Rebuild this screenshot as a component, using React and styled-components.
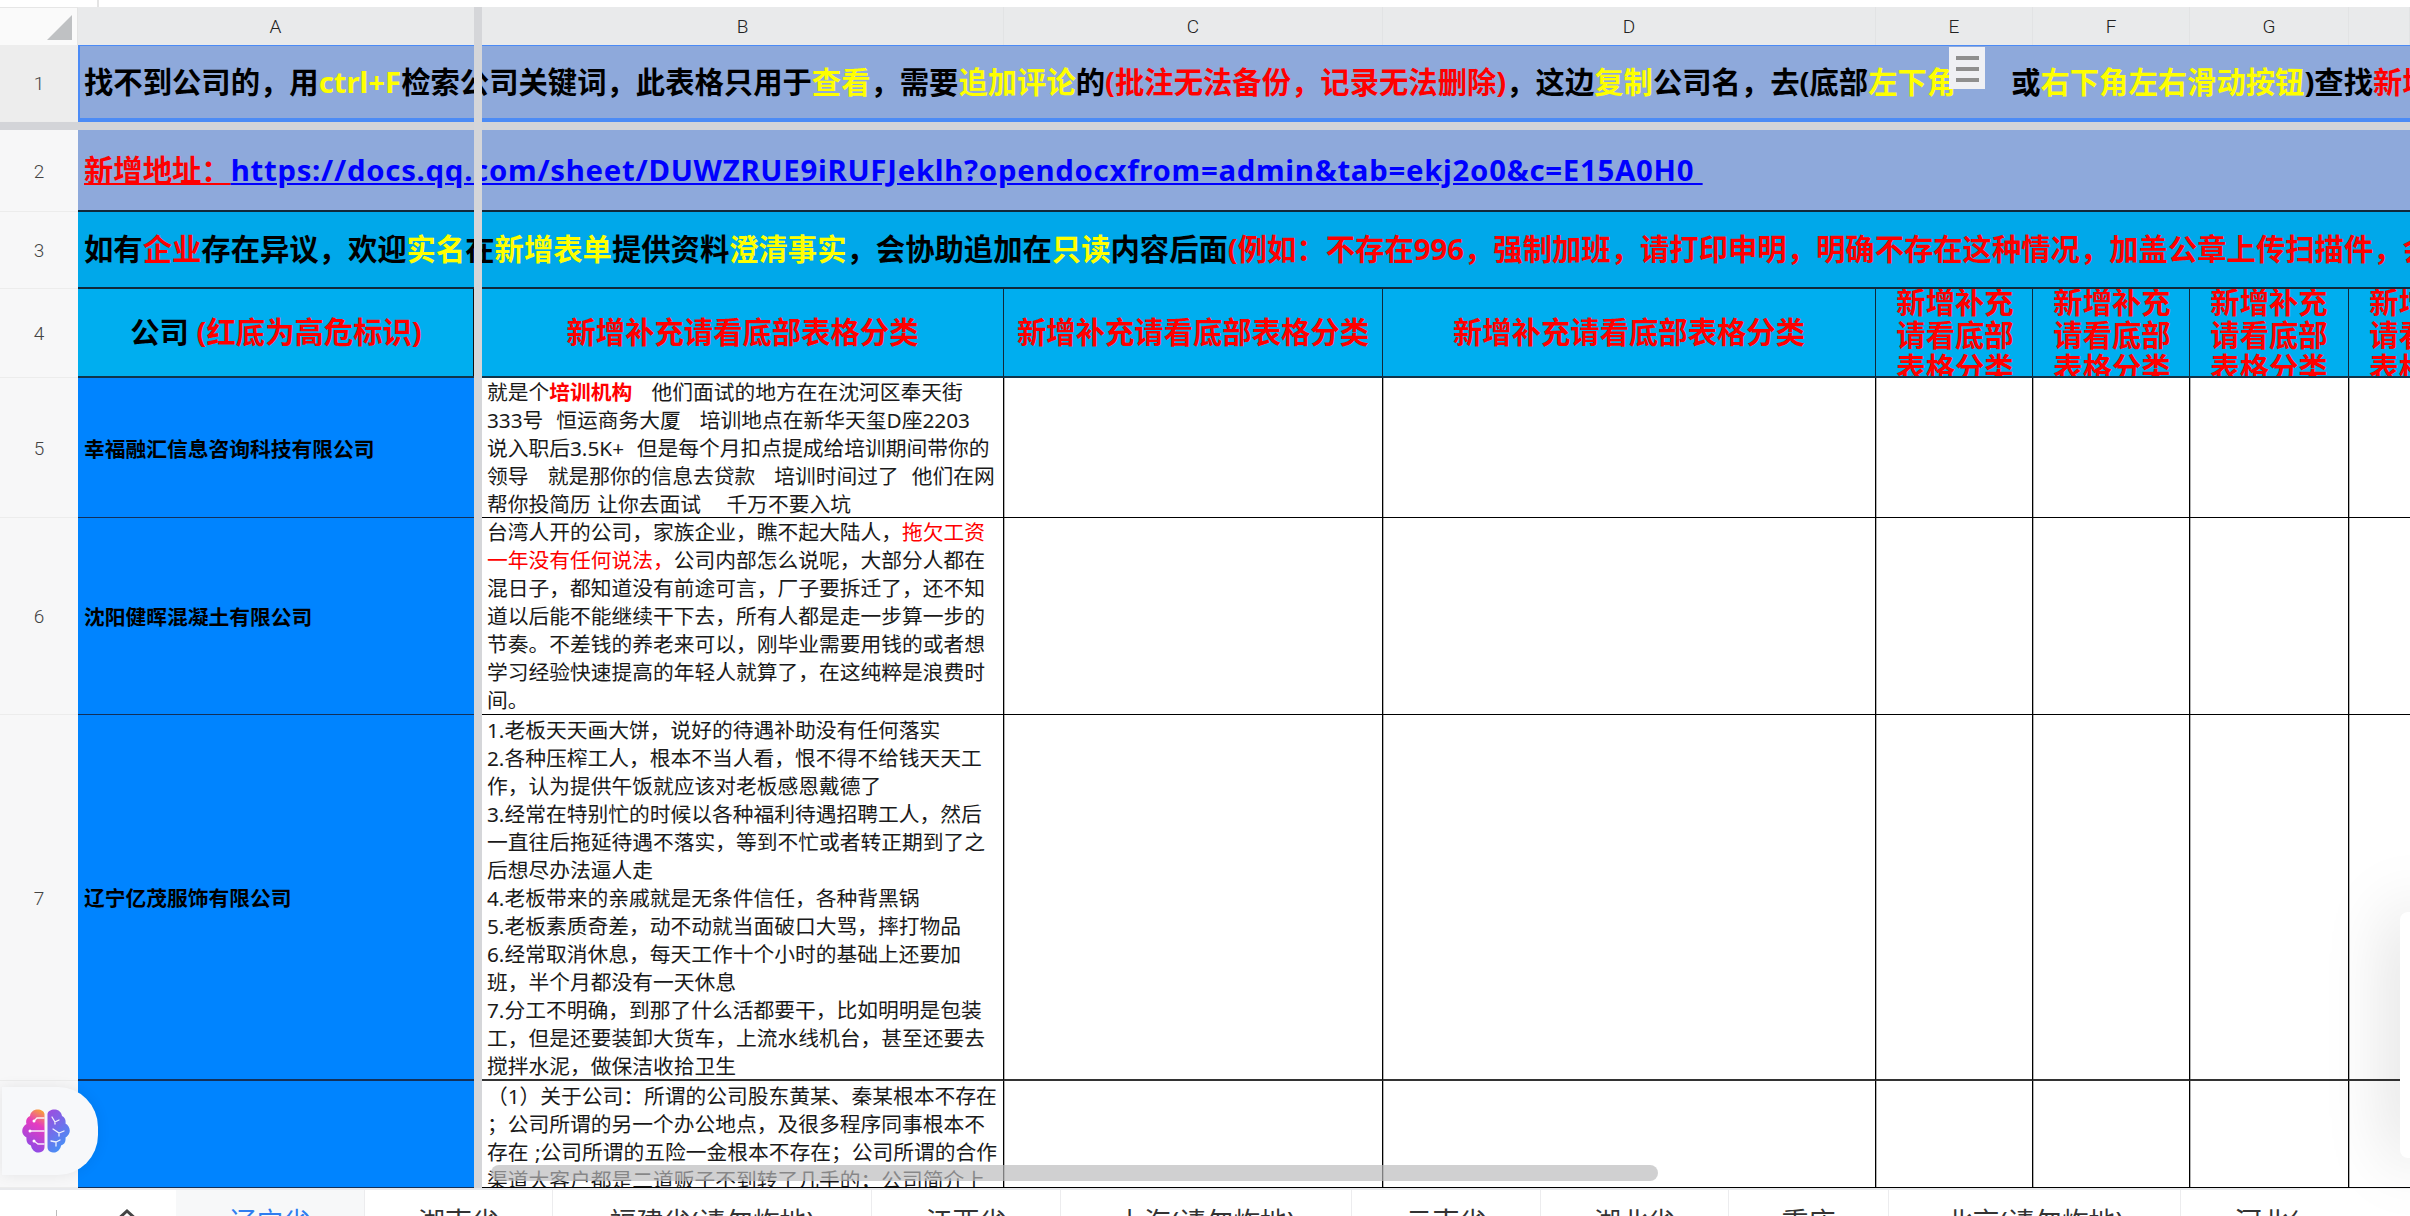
import styled, { createGlobalStyle } from "styled-components";

const GlobalStyle = createGlobalStyle`
  html, body {
    margin: 0;
    padding: 0;
    background: #fff;
  }
  * {
    box-sizing: border-box;
  }
`;

const FONT = `"Noto Sans", "Noto Sans CJK SC", sans-serif`;
const COLUMNS = "78px 404px 522px 379px 493px 157px 157px 159px 61px";

const Page = styled.div`
  position: relative;
  width: 2410px;
  height: 1216px;
  overflow: hidden;
  background: #fff;
  font-family: ${FONT};
  color: #000;
`;
const TopStrip = styled.div`
  height: 7px;
  width: 99px;
  border-right: 2px solid #e4e4e4;
`;
const Grid = styled.div`
  display: grid;
  grid-template-columns: ${COLUMNS};
  height: ${(p) => p.$h}px;
`;
const Corner = styled.div`
  display: flex;
  justify-content: flex-end;
  align-items: flex-end;
  padding: 0 5px 5px 0;
  background: #fafafa;
  border-top: 1px solid #e6e6e6;
  border-right: 1px solid #e4e4e4;
`;
const CornerMark = styled.div`
  width: 25px;
  height: 25px;
  background: #bfc1c3;
  clip-path: polygon(100% 0, 100% 100%, 0 100%);
`;
const ColumnName = styled.div`
  display: flex;
  align-items: center;
  justify-content: center;
  background: #e9eaeb;
  border-right: 1px solid #e2e3e4;
  font-family: "Roboto", sans-serif;
  font-size: 19px;
  font-weight: 300;
  color: #222;
  &:nth-child(2) {
    padding-right: 8px;
  }
`;
const RowName = styled.div`
  display: flex;
  align-items: center;
  justify-content: center;
  padding-top: 1px;
  background: ${(p) => (p.$active ? "#ededed" : "#f7f7f8")};
  border-bottom: 1px solid #ececec;
  font-family: "Roboto", sans-serif;
  font-size: 19px;
  font-weight: 300;
  color: #444;
`;
const BannerRow = styled.div`
  display: flex;
  height: ${(p) => p.$h}px;
  ${RowName} {
    width: 78px;
    flex: none;
  }
`;
const Banner = styled.div`
  flex: 1;
  min-width: 0;
  display: block;
  padding-left: 6px;
  overflow: hidden;
  white-space: pre;
  font-size: 29.33px;
  font-weight: 700;
  line-height: ${(p) => p.$h}px;
  background: ${(p) => (p.$sky ? "#00a8ea" : "#8ea9db")};
  ${(p) => p.$line && "border-bottom: 2px solid #10283a;"}
  ${(p) =>
    p.$selected &&
    `border-top: 1px solid #4c8bf5;
     border-left: 2px solid #4c8bf5;
     border-bottom: 4px solid #4c8bf5;
     padding-left: 4px;`}
`;
const Hi = styled.span`
  color: #ffff00;
`;
const Warn = styled.span`
  color: #ff0000;
`;
const Strong = styled.span`
  color: #ff0000;
  font-weight: 700;
`;
const Gap = styled.span`
  display: inline-block;
  width: 55px;
`;
const FreezeBand = styled.div`
  height: 8px;
  background: #d3d4d8;
`;
const AddressLabel = styled.span`
  color: #ff0000;
  text-decoration: underline;
`;
const Address = styled.span`
  color: #0000ff;
  letter-spacing: 0.74px;
  text-decoration: underline;
`;
const HeadCell = styled.div`
  display: flex;
  align-items: center;
  justify-content: center;
  padding-right: ${(p) => (p.$first ? "8px" : "0")};
  overflow: hidden;
  background: ${(p) =>
    p.$first
      ? "linear-gradient(to left, transparent 8px, #111 8px, #111 9px, transparent 9px), #00aeef"
      : "#00aeef"};
  border-right: ${(p) => (p.$first ? "0" : "1px solid #10283a")};
  border-bottom: 2px solid #10344a;
  font-size: 29.33px;
  font-weight: 700;
  line-height: 33px;
  white-space: pre;
  &:nth-child(n + 6) {
    justify-content: flex-start;
  }
  &:last-child {
    border-right: 0;
  }
`;
const Wrapped = styled.span`
  display: block;
  flex: none;
  width: 118px;
  margin: 5px 0 0 20px;
  white-space: normal;
  text-align: center;
`;
const CompanyCell = styled.div`
  display: flex;
  align-items: center;
  padding: 0 8px 0 6px;
  background: #0084ff;
  border-bottom: ${(p) => (p.$thick ? "2px solid #12305a" : "1px solid #12305a")};
  font-size: 20.75px;
  font-weight: 700;
`;
const TextCell = styled.div`
  display: flex;
  flex-direction: column;
  justify-content: ${(p) => (p.$top ? "flex-start" : "center")};
  padding: ${(p) => (p.$top ? "1px" : p.$thick ? "2px" : "0")} 0 0 5px;
  overflow: hidden;
  border-right: 1px solid #000;
  border-bottom: ${(p) => (p.$thick ? "2px solid #333" : "1px solid #000")};
  box-shadow: 1px 0 0 rgba(0, 0, 0, 0.3);
  font-size: 20.75px;
  line-height: 28px;
  word-spacing: 1px;
  color: #1a1a1a;
`;
const Line = styled.div`
  height: 28px;
  flex: none;
  white-space: pre;
`;
const EmptyCell = styled.div`
  border-right: 1px solid #000;
  border-bottom: ${(p) => (p.$thick ? "2px solid #333" : "1px solid #000")};
  box-shadow: 1px 0 0 rgba(0, 0, 0, 0.3);
  &:last-child {
    border-right: 0;
    box-shadow: none;
  }
`;
const TabBar = styled.div`
  display: flex;
  height: 28px;
  overflow: hidden;
  background: #fff;
`;
const TabTools = styled.div`
  position: relative;
  width: 176px;
  flex: none;
  border-top: 2px solid #e8e9ec;
`;
const ToolLine = styled.div`
  position: absolute;
  left: 56px;
  top: 20px;
  width: 1px;
  height: 20px;
  background: #bbb;
`;
const HomeMark = styled.div`
  position: absolute;
  left: 114px;
  top: 18px;
`;
const TabList = styled.div`
  display: flex;
  width: 2124px;
  flex: none;
  overflow: hidden;
  border-top: 2px solid #e8e9ec;
`;
const TabRest = styled.div`
  flex: 1;
  border-top: 1px solid #f1f1f3;
`;
const Tab = styled.div`
  flex: none;
  width: ${(p) => p.$w}px;
  padding-top: 12px;
  text-align: center;
  white-space: nowrap;
  overflow: hidden;
  background: ${(p) => (p.$active ? "#f7f8f9" : "#fff")};
  border-right: 1px solid #ececee;
  font-size: 27px;
  line-height: 40px;
  color: ${(p) => (p.$active ? "#2f7df0" : "#333")};
`;
const FreezeLine = styled.div`
  position: absolute;
  left: 474px;
  top: 7px;
  bottom: 28px;
  width: 8px;
  background: #d5d6d9;
`;
const MoveHandle = styled.div`
  position: absolute;
  left: 1949px;
  top: 47px;
  width: 36px;
  height: 42px;
  display: flex;
  flex-direction: column;
  align-items: center;
  gap: 7px;
  padding-top: 9px;
  background: #eff0f4;
  span {
    width: 23px;
    height: 4px;
    background: #8f8f8f;
  }
`;
const ScrollThumb = styled.div`
  position: absolute;
  left: 491px;
  top: 1165px;
  width: 1167px;
  height: 16px;
  border-radius: 8px;
  background: rgba(185, 185, 187, 0.68);
`;
const AssistButton = styled.div`
  position: absolute;
  left: 2px;
  top: 1087px;
  width: 96px;
  height: 88px;
  display: flex;
  align-items: center;
  padding-left: 20px;
  border-radius: 0 40px 40px 0;
  background: #f7f8fa;
  box-shadow: 0 0 14px rgba(0, 0, 0, 0.08);
`;
const SidePanel = styled.div`
  position: absolute;
  left: 2400px;
  top: 912px;
  width: 30px;
  height: 246px;
  border-radius: 8px;
  background: #fff;
  box-shadow: 0 0 70px rgba(0, 0, 0, 0.22);
`;

const rows = [
  {
    n: 5,
    company: "幸福融汇信息咨询科技有限公司",
    height: 140,
    lines: [
      <>就是个<Strong>培训机构</Strong>   他们面试的地方在在沈河区奉天街</>,
      "333号  恒运商务大厦   培训地点在新华天玺D座2203",
      "说入职后3.5K+  但是每个月扣点提成给培训期间带你的",
      "领导   就是那你的信息去贷款   培训时间过了  他们在网",
      "帮你投简历 让你去面试    千万不要入坑",
    ],
  },
  {
    n: 6,
    company: "沈阳健晖混凝土有限公司",
    height: 197,
    lines: [
      <>台湾人开的公司，家族企业，瞧不起大陆人，<Warn>拖欠工资</Warn></>,
      <><Warn>一年没有任何说法，</Warn>公司内部怎么说呢，大部分人都在</>,
      "混日子，都知道没有前途可言，厂子要拆迁了，还不知",
      "道以后能不能继续干下去，所有人都是走一步算一步的",
      "节奏。不差钱的养老来可以，刚毕业需要用钱的或者想",
      "学习经验快速提高的年轻人就算了，在这纯粹是浪费时",
      "间。",
    ],
  },
  {
    n: 7,
    company: "辽宁亿茂服饰有限公司",
    height: 366,
    thick: true,
    lines: [
      "1.老板天天画大饼，说好的待遇补助没有任何落实",
      "2.各种压榨工人，根本不当人看，恨不得不给钱天天工",
      "作，认为提供午饭就应该对老板感恩戴德了",
      "3.经常在特别忙的时候以各种福利待遇招聘工人，然后",
      "一直往后拖延待遇不落实，等到不忙或者转正期到了之",
      "后想尽办法逼人走",
      "4.老板带来的亲戚就是无条件信任，各种背黑锅",
      "5.老板素质奇差，动不动就当面破口大骂，摔打物品",
      "6.经常取消休息，每天工作十个小时的基础上还要加",
      "班，半个月都没有一天休息",
      "7.分工不明确，到那了什么活都要干，比如明明是包装",
      "工，但是还要装卸大货车，上流水线机台，甚至还要去",
      "搅拌水泥，做保洁收拾卫生",
    ],
  },
  {
    n: 8,
    company: "",
    height: 107,
    top: true,
    lines: [
      "（1）关于公司：所谓的公司股东黄某、秦某根本不存在",
      "；公司所谓的另一个办公地点，及很多程序同事根本不",
      "存在 ;公司所谓的五险一金根本不存在；公司所谓的合作",
      "渠道大客户都是二道贩子不到转了几手的；公司简介上",
    ],
  },
];

const tabs = [
  ["辽宁省", 189],
  ["湖南省", 188],
  ["福建省(请勿炸地)", 319],
  ["江西省", 189],
  ["上海(请勿炸地)", 291],
  ["云南省", 189],
  ["湖北省", 188],
  ["重庆", 160],
  ["北京(请勿炸地)", 292],
  ["河北省", 189],
];

const NOTICE = "新增补充请看底部表格分类";

const BrainIcon = () => (
  <svg width="48" height="44" viewBox="0 0 48 44">
    <defs>
      <linearGradient id="brainLeft" x1="0.8" y1="0" x2="0.5" y2="1">
        <stop offset="0" stopColor="#f9a03a" />
        <stop offset="0.35" stopColor="#e63bc0" />
        <stop offset="1" stopColor="#8a4ce8" />
      </linearGradient>
      <linearGradient id="brainRight" x1="0.2" y1="0" x2="0.7" y2="1">
        <stop offset="0" stopColor="#9a4fe0" />
        <stop offset="1" stopColor="#3f96f8" />
      </linearGradient>
    </defs>
    <path
      d="M22.5 5C22 1.500 18 0 14.500 0.500C11 1 8.500 3.500 8 7C4.500 8.500 3.500 12 4.500 15C1.500 17 -0.500 20 0.500 24C1.200 26.500 3 27.500 4.500 28.500C4 32.500 5.500 35.500 9 36.500C9.500 40.500 13 44 17 43.500C20 43.200 22.500 41.500 22.500 38Z"
      fill="url(#brainLeft)"
    />
    <path
      d="M25.500 5C26 1.500 30 0 33.500 0.500C37 1 39.500 3.500 40 7C43 8.500 44 11 43.500 14.500C46.500 16 48.500 20 47.500 23.500C46.800 26 45 27.500 43.500 28.500C44 32.500 42.500 35.500 39 36.500C38.500 40.500 35 44 31 43.500C28 43.200 25.500 41.500 25.500 38Z"
      fill="url(#brainRight)"
    />
    <g stroke="#fff" strokeWidth="1.3" fill="none" strokeLinecap="round" opacity="0.9">
      <path d="M22 9H15L12 12" />
      <path d="M22 22H8" />
      <path d="M22 35H16L12 32" />
      <path d="M30 8L33 13L37 11M33 13V15" />
      <path d="M31 20L37 24L42 22M37 24V27" />
      <path d="M29 32L34 33L38 31M34 33V37" />
    </g>
    <g fill="#fff">
      <circle cx="12" cy="12" r="1.500" />
      <circle cx="8" cy="22" r="1.500" />
      <circle cx="12" cy="32" r="1.500" />
    </g>
  </svg>
);

const App = () => {
  return (
    <>
      <GlobalStyle />
      <Page>
        <TopStrip />
        <Grid $h={38}>
          <Corner>
            <CornerMark />
          </Corner>
          {["A", "B", "C", "D", "E", "F", "G", ""].map((c, i) => (
            <ColumnName key={i}>{c}</ColumnName>
          ))}
        </Grid>

        <BannerRow $h={77}>
          <RowName $active>1</RowName>
          <Banner $selected $h={72}>
            找不到公司的，用<Hi>ctrl+F</Hi>检索公司关键词，此表格只用于<Hi>查看</Hi>，需要<Hi>追加评论</Hi>的<Warn>(批注无法备份，记录无法删除)</Warn>，这边<Hi>复制</Hi>公司名，去(底部<Hi>左下角</Hi><Gap />或<Hi>右下角左右滑动按钮</Hi>)查找<Warn>新增表单</Warn>
          </Banner>
        </BannerRow>
        <FreezeBand />
        <BannerRow $h={82}>
          <RowName>2</RowName>
          <Banner $line $h={80}>
            <AddressLabel>新增地址：</AddressLabel>
            <Address>https://docs.qq.com/sheet/DUWZRUE9iRUFJeklh?opendocxfrom=admin&amp;tab=ekj2o0&amp;c=E15A0H0 </Address>
          </Banner>
        </BannerRow>
        <BannerRow $h={77}>
          <RowName>3</RowName>
          <Banner $sky $line $h={75}>
            如有<Warn>企业</Warn>存在异议，欢迎<Hi>实名</Hi>在<Hi>新增表单</Hi>提供资料<Hi>澄清事实</Hi>，会协助追加在<Hi>只读</Hi>内容后面<Warn>(例如：不存在996，强制加班，请打印申明，明确不存在这种情况，加盖公章上传扫描件，会协助追加)</Warn>
          </Banner>
        </BannerRow>

        <Grid $h={89}>
          <RowName>4</RowName>
          <HeadCell $first>
            公司 <Warn>(红底为高危标识)</Warn>
          </HeadCell>
          <HeadCell><Warn>{NOTICE}</Warn></HeadCell>
          <HeadCell><Warn>{NOTICE}</Warn></HeadCell>
          <HeadCell><Warn>{NOTICE}</Warn></HeadCell>
          {[0, 1, 2, 3].map((i) => (
            <HeadCell key={i}>
              <Wrapped><Warn>{NOTICE}</Warn></Wrapped>
            </HeadCell>
          ))}
        </Grid>

        {rows.map((row) => (
          <Grid key={row.n} $h={row.height}>
            <RowName>{row.n}</RowName>
            <CompanyCell $thick={row.thick}>{row.company}</CompanyCell>
            <TextCell $thick={row.thick} $top={row.top}>
              {row.lines.map((line, i) => (
                <Line key={i}>{line}</Line>
              ))}
            </TextCell>
            {[0, 1, 2, 3, 4, 5].map((i) => (
              <EmptyCell key={i} $thick={row.thick} />
            ))}
          </Grid>
        ))}

        <TabBar>
          <TabTools>
            <ToolLine />
            <HomeMark>
              <svg width="26" height="26" viewBox="0 0 26 26" fill="none" stroke="#444" strokeWidth="3">
                <path d="M2 13L13 3L24 13V26H2Z" />
              </svg>
            </HomeMark>
          </TabTools>
          <TabList>
            {tabs.map(([name, width], i) => (
              <Tab key={name} $active={i === 0} $w={width}>
                {name}
              </Tab>
            ))}
          </TabList>
          <TabRest />
        </TabBar>

        <FreezeLine />
        <MoveHandle>
          <span />
          <span />
          <span />
        </MoveHandle>
        <ScrollThumb />
        <AssistButton>
          <BrainIcon />
        </AssistButton>
        <SidePanel />
      </Page>
    </>
  );
};

export default App;
